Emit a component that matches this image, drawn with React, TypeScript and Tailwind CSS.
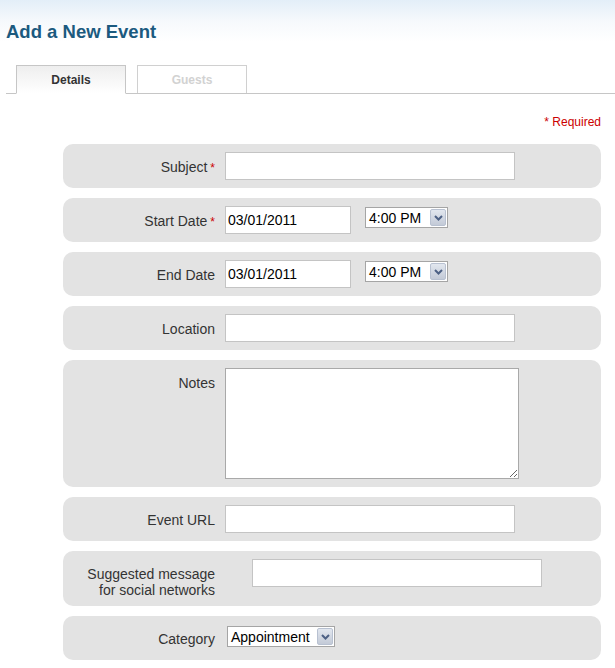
import { ReactNode } from 'react';

const FakeSelect = ({ value, width }: { value: string; width: string }) => (
  <div
    className={`${width} h-[21px] flex items-center justify-between border border-[#a5a5a5] bg-white pl-[3px] pr-[1px] text-[14px] text-black`}
  >
    <span className="leading-none">{value}</span>
    <span className="w-[16px] h-[17px] flex items-center justify-center rounded-[2px] border border-[#b8c1d1] bg-gradient-to-b from-[#e2e7ef] to-[#c3cad7]">
      <svg width="9" height="6" viewBox="0 0 9 6">
        <path d="M1 1 L4.5 4.5 L8 1" fill="none" stroke="#4d6185" strokeWidth="2" />
      </svg>
    </span>
  </div>
);

const Row = ({
  label,
  required,
  children,
  labelClass = 'h-[28px] pt-px leading-[28px]',
}: {
  label: ReactNode;
  required?: boolean;
  children: ReactNode;
  labelClass?: string;
}) => (
  <div className="flex items-start rounded-[10px] bg-[#e3e3e3] py-2">
    <div className={`w-[162px] shrink-0 pr-[10px] text-right text-[14px] text-[#333] ${labelClass}`}>
      {label}
      {required && <span className="ml-[3px] text-[12px] leading-none text-[#cc0000]">*</span>}
    </div>
    {children}
  </div>
);

const inputCls = 'h-[28px] border border-[#c4c4c4] bg-white px-[2px] text-[14px] text-black outline-none';

export default function App() {
  return (
    <div className="min-h-[668px] bg-white font-['Liberation_Sans',Arial,sans-serif]">
      <div className="bg-gradient-to-b from-[#e3eef8] via-[#f6f9fc] to-white pl-[6px] pt-[21px]">
        <h1 className="text-[18.5px] font-bold leading-[21px] text-[#1b5a7f]">Add a New Event</h1>
      </div>

      <div className="ml-[6px] mt-[23px] flex items-end gap-[11px] border-b border-[#c6c6c6] pl-[10px]">
        <div className="-mb-px flex h-[29px] w-[110px] items-center justify-center border border-b-white border-[#c6c6c6] bg-gradient-to-b from-[#eeeeee] to-white text-[12px] font-bold text-[#333]">
          Details
        </div>
        <div className="flex h-[28px] w-[110px] items-center justify-center border border-b-0 border-[#d0d0d0] bg-white text-[12px] font-bold text-[#d2d2d2]">
          Guests
        </div>
      </div>

      <div className="ml-[63px] mr-[14px]">
        <div className="mt-[20px] text-right text-[12px] leading-[16px] text-[#cc0000]">* Required</div>

        <div className="mt-[14px] flex flex-col gap-[10px]">
          <Row label="Subject" required>
            <input className={`${inputCls} w-[290px]`} />
          </Row>

          <Row label="Start Date" required>
            <input className={`${inputCls} w-[126px]`} defaultValue="03/01/2011" />
            <div className="ml-[14px] mt-px">
              <FakeSelect value="4:00 PM" width="w-[83px]" />
            </div>
          </Row>

          <Row label="End Date">
            <input className={`${inputCls} w-[126px]`} defaultValue="03/01/2011" />
            <div className="ml-[14px] mt-px">
              <FakeSelect value="4:00 PM" width="w-[83px]" />
            </div>
          </Row>

          <Row label="Location">
            <input className={`${inputCls} w-[290px]`} />
          </Row>

          <Row label="Notes" labelClass="pt-[7px] leading-4">
            <textarea className="h-[111px] w-[294px] resize border border-[#a9a9a9] bg-white text-[14px] outline-none" />
          </Row>

          <Row label="Event URL">
            <input className={`${inputCls} w-[290px]`} />
          </Row>

          <Row
            label={
              <>
                Suggested message
                <br />
                for social networks
              </>
            }
            labelClass="pt-[7px] leading-4"
          >
            <input className={`${inputCls} ml-[27px] w-[290px]`} />
          </Row>

          <Row label="Category">
            <div className="ml-[2px] mt-[2px]">
              <FakeSelect value="Appointment" width="w-[108px]" />
            </div>
          </Row>
        </div>
      </div>
    </div>
  );
}
